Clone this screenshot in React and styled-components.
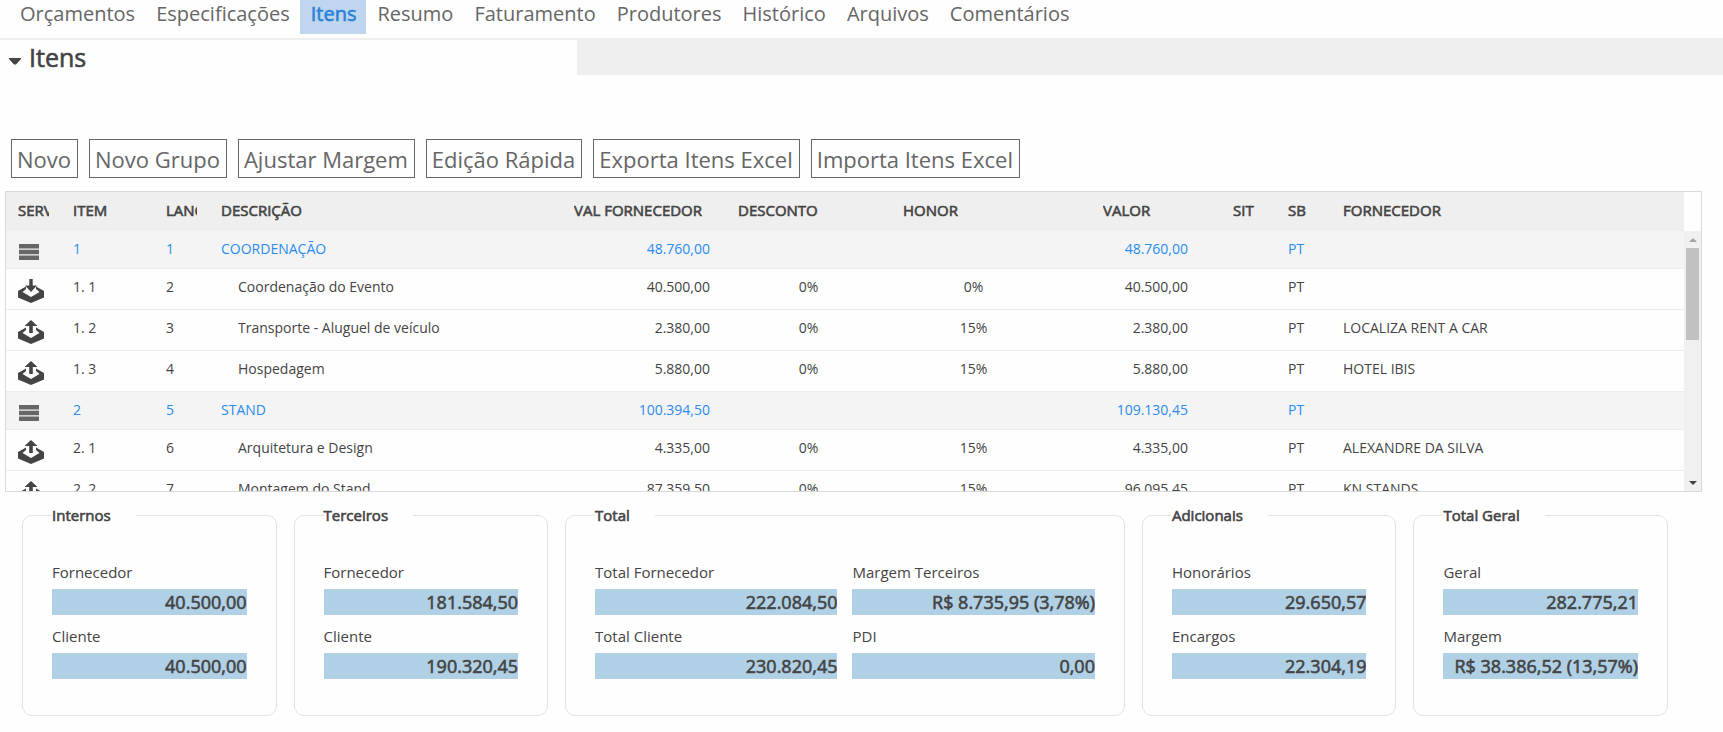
import React from "react";
import styled, { createGlobalStyle, css } from "styled-components";

const tabs = [
  "Orçamentos",
  "Especificações",
  "Itens",
  "Resumo",
  "Faturamento",
  "Produtores",
  "Histórico",
  "Arquivos",
  "Comentários",
];

const actions = [
  "Novo",
  "Novo Grupo",
  "Ajustar Margem",
  "Edição Rápida",
  "Exporta Itens Excel",
  "Importa Itens Excel",
];

// Columns without a width share what is left
const columns = [
  { key: "serv", title: "SERV", width: 55 },
  { key: "item", title: "ITEM", width: 93 },
  { key: "lanc", title: "LANC", width: 55 },
  { key: "desc", title: "DESCRIÇÃO" },
  { key: "cost", title: "VAL FORNECEDOR", width: 164, align: "right", end: 16 },
  { key: "discount", title: "DESCONTO", width: 165, align: "center" },
  { key: "fee", title: "HONOR", width: 165, align: "center" },
  { key: "value", title: "VALOR", width: 165, align: "right", start: 47, end: 33 },
  { key: "sit", title: "SIT", width: 55 },
  { key: "sb", title: "SB", width: 55 },
  { key: "supplier", title: "FORNECEDOR" },
];

const rows = [
  { type: "group", item: "1", lanc: "1", desc: "COORDENAÇÃO", cost: "48.760,00", value: "48.760,00", sb: "PT" },
  { type: "in", item: "1. 1", lanc: "2", desc: "Coordenação do Evento", cost: "40.500,00", discount: "0%", fee: "0%", value: "40.500,00", sb: "PT" },
  { type: "out", item: "1. 2", lanc: "3", desc: "Transporte - Aluguel de veículo", cost: "2.380,00", discount: "0%", fee: "15%", value: "2.380,00", sb: "PT", supplier: "LOCALIZA RENT A CAR" },
  { type: "out", item: "1. 3", lanc: "4", desc: "Hospedagem", cost: "5.880,00", discount: "0%", fee: "15%", value: "5.880,00", sb: "PT", supplier: "HOTEL IBIS" },
  { type: "group", item: "2", lanc: "5", desc: "STAND", cost: "100.394,50", value: "109.130,45", sb: "PT" },
  { type: "out", item: "2. 1", lanc: "6", desc: "Arquitetura e Design", cost: "4.335,00", discount: "0%", fee: "15%", value: "4.335,00", sb: "PT", supplier: "ALEXANDRE DA SILVA" },
  { type: "out", item: "2. 2", lanc: "7", desc: "Montagem do Stand", cost: "87.359,50", discount: "0%", fee: "15%", value: "96.095,45", sb: "PT", supplier: "KN STANDS" },
];

const totals = [
  { title: "Internos", fields: [["Fornecedor", "40.500,00"], ["Cliente", "40.500,00"]] },
  { title: "Terceiros", fields: [["Fornecedor", "181.584,50"], ["Cliente", "190.320,45"]] },
  {
    title: "Total",
    wide: true,
    fields: [
      ["Total Fornecedor", "222.084,50"],
      ["Margem Terceiros", "R$ 8.735,95 (3,78%)"],
      ["Total Cliente", "230.820,45"],
      ["PDI", "0,00"],
    ],
  },
  { title: "Adicionais", fields: [["Honorários", "29.650,57"], ["Encargos", "22.304,19"]] },
  { title: "Total Geral", fields: [["Geral", "282.775,21"], ["Margem", "R$ 38.386,52 (13,57%)"]] },
];

const App = () => {
  return (
    <>
      <GlobalStyle />
      <TabBar>
        {tabs.map((tab) => (
          <Tab key={tab} href="#" $active={tab === "Itens"}>
            {tab}
          </Tab>
        ))}
      </TabBar>
      <main>
        <SectionHeader>
          <SectionToggle>
            <Caret viewBox="0 0 12 7">
              <path d="M0 0h12v1L7 6.5H5L0 1z" />
            </Caret>
            <SectionTitle>Itens</SectionTitle>
          </SectionToggle>
        </SectionHeader>
        <Toolbar>
          {actions.map((action) => (
            <ActionButton key={action} type="button">
              {action}
            </ActionButton>
          ))}
        </Toolbar>
        <ItemsGrid />
        <Totals>
          {totals.map((group) => (
            <TotalsGroup key={group.title} {...group} />
          ))}
        </Totals>
      </main>
    </>
  );
};

const ItemsGrid = () => {
  return (
    <GridPanel>
      <GridViewport>
        <Table>
          <colgroup>
            {columns.map(({ key, width }) => (
              <col key={key} width={width} />
            ))}
          </colgroup>
          <thead>
            <tr>
              {columns.map(({ key, title, start }) => (
                <HeadCell key={key} $start={start}>
                  <Clip>{title}</Clip>
                </HeadCell>
              ))}
            </tr>
          </thead>
          <tbody>
            {rows.map((row) => (
              <Row key={row.lanc} $group={row.type === "group"}>
                {columns.map(({ key, align, end }) => (
                  <Cell
                    key={key}
                    $align={align}
                    $end={end}
                    $indent={key === "desc" && row.type !== "group"}
                  >
                    {key === "serv" ? <ServiceIcon type={row.type} /> : row[key]}
                  </Cell>
                ))}
              </Row>
            ))}
          </tbody>
        </Table>
      </GridViewport>
      <ScrollColumn>
        <ScrollTrack>
          <ScrollButton type="button" aria-label="Rolar para cima">
            <ScrollArrow viewBox="0 0 8 4" $muted>
              <path d="M0 4L4 0l4 4z" />
            </ScrollArrow>
          </ScrollButton>
          <ScrollThumb />
          <ScrollButton type="button" aria-label="Rolar para baixo">
            <ScrollArrow viewBox="0 0 8 4">
              <path d="M0 0l4 4 4-4z" />
            </ScrollArrow>
          </ScrollButton>
        </ScrollTrack>
      </ScrollColumn>
    </GridPanel>
  );
};

const ServiceIcon = ({ type }) => {
  if (type === "group") {
    return (
      <GroupIcon viewBox="0 0 20 16">
        <path d="M0 0h20v4.5H0zM0 5.75h20v4.5H0zM0 11.5h20V16H0z" />
      </GroupIcon>
    );
  }
  return (
    <TrayIcon viewBox="0 0 26 24">
      {type === "in" ? (
        <path d="M11.3 0h3.400v6.500h4.300l-6 6.500-6-6.500h4.300z" />
      ) : (
        <path d="M13 0l6.500 6h-4.700v7h-3.600V6H6.500z" />
      )}
      <path d="M8 7.500v2.500L4.500 13l8.500 5 8.500-5-3.500-3V7.500l8 4.500v6.500L13 24 0 18.500V12z" />
    </TrayIcon>
  );
};

const TotalsGroup = ({ title, wide, fields }) => {
  return (
    <Fieldset>
      <Legend>{title}</Legend>
      <Fields $wide={wide}>
        {fields.map(([label, value]) => (
          <Field key={label}>
            {label}
            <FieldValue readOnly value={value} />
          </Field>
        ))}
      </Fields>
    </Fieldset>
  );
};

const GlobalStyle = createGlobalStyle`
  * {
    box-sizing: border-box;
  }

  body {
    margin: 0;
    background: #fefefe;
    color: #444;
    font-family: "Open Sans", "Noto Sans", sans-serif;
    font-size: 14px;
    overflow-x: hidden;
  }
`;

// Regular weight thickened, the headings keep the regular letter widths
const thick = css`
  font-weight: 400;
  -webkit-text-stroke: 0.6px currentColor;
`;

const TabBar = styled.nav`
  display: flex;
  height: 40px;
  padding-left: 9px;
  border-bottom: 2px solid #efefef;
`;

const Tab = styled.a`
  height: 34px;
  padding: 0 10px 0 11px;
  font-size: 20px;
  line-height: 28px;
  color: #666;
  text-decoration: none;
  white-space: nowrap;

  ${({ $active }) =>
    $active &&
    css`
      ${thick}
      color: #2a82d7;
      background: #bfd6ee;
    `}
`;

const SectionHeader = styled.header`
  display: flex;
  height: 35px;
  background: #efefef;
`;

const SectionToggle = styled.div`
  display: flex;
  align-items: center;
  gap: 8px;
  width: 33.5%;
  padding-left: 9px;
  background: #fefefe;
`;

const Caret = styled.svg`
  width: 12px;
  height: 7px;
  margin-top: 8px;
  fill: #444;
`;

const SectionTitle = styled.h2`
  ${thick}
  margin: 0;
  font-size: 25px;
  line-height: 35px;
`;

const Toolbar = styled.div`
  display: flex;
  flex-wrap: wrap;
  gap: 11px;
  padding: 64px 11px 13px;
`;

const ActionButton = styled.button`
  height: 39px;
  padding: 0 6px 0 5px;
  border: 1px solid #666;
  background: transparent;
  color: #666;
  font-family: inherit;
  font-size: 22px;
  line-height: 34px;
  white-space: nowrap;
`;

const GridPanel = styled.section`
  display: flex;
  height: 301px;
  margin: 0 21px 0 5px;
  border: 1px solid #d9d9d9;
`;

const GridViewport = styled.div`
  flex: 1;
  min-width: 0;
  overflow: hidden;
`;

const Table = styled.table`
  width: 100%;
  table-layout: fixed;
  border-collapse: separate;
  border-spacing: 0;
`;

const HeadCell = styled.th`
  ${thick}
  height: 39px;
  padding: 0 12px 4px;
  padding-left: ${({ $start }) => $start || 12}px;
  background: #efefef;
  font-size: 15px;
  line-height: 22px;
  text-align: left;
`;

const Clip = styled.div`
  overflow: hidden;
  white-space: nowrap;
`;

const Row = styled.tr`
  height: ${({ $group }) => ($group ? 38 : 41)}px;
  background: ${({ $group }) => ($group ? "#f4f4f4" : "#fefefe")};
  color: ${({ $group }) => ($group ? "#2a8cf0" : "#444")};
`;

const Cell = styled.td`
  padding: 8px 12px 0;
  padding-left: ${({ $indent }) => ($indent ? 29 : 12)}px;
  padding-right: ${({ $end }) => $end || 12}px;
  border-bottom: 1px solid #ebebeb;
  line-height: 20px;
  text-align: ${({ $align }) => $align || "left"};
  vertical-align: top;
  white-space: nowrap;
`;

const GroupIcon = styled.svg`
  display: block;
  width: 20px;
  height: 16px;
  margin: 5px 0 0 1px;
  fill: #666;
`;

const TrayIcon = styled.svg`
  display: block;
  width: 26px;
  height: 24px;
  margin-top: 2px;
  fill: #444;
`;

const ScrollColumn = styled.div`
  width: 17px;
  padding-top: 39px;
`;

const ScrollTrack = styled.div`
  display: flex;
  flex-direction: column;
  align-items: center;
  height: 100%;
  background: #f0f0f0;
`;

const ScrollButton = styled.button`
  display: flex;
  align-items: center;
  justify-content: center;
  width: 17px;
  height: 17px;
  padding: 0;
  border: 0;
  background: none;

  &:last-child {
    margin-top: auto;
  }
`;

const ScrollArrow = styled.svg`
  width: 8px;
  height: 4px;
  fill: ${({ $muted }) => ($muted ? "#a3a3a3" : "#444")};
`;

const ScrollThumb = styled.div`
  width: 13px;
  height: 92px;
  background: #c1c1c1;
`;

const Totals = styled.div`
  display: grid;
  grid-template-columns: 5fr 5fr 11fr 5fr 5fr;
  gap: 17px;
  padding: 12px 55px 16px 22px;
`;

const Fieldset = styled.fieldset`
  min-width: 0;
  margin: 0;
  padding: 35px 29px 36px;
  border: 1px solid #e2e2e2;
  border-radius: 10px;
`;

const Legend = styled.legend`
  ${thick}
  padding: 0 25px 0 0;
  font-size: 15px;
  line-height: 22px;
`;

const Fields = styled.div`
  display: grid;
  grid-template-columns: ${({ $wide }) => ($wide ? "1fr 1fr" : "1fr")};
  gap: 10px 15px;
`;

const Field = styled.label`
  display: flex;
  flex-direction: column;
  gap: 6px;
  min-width: 0;
  font-size: 15px;
  line-height: 22px;
`;

const FieldValue = styled.input`
  ${thick}
  width: 100%;
  height: 26px;
  padding: 0;
  border: 0;
  background: #b0d0e5;
  color: #444;
  font-family: inherit;
  font-size: 18px;
  text-align: right;
`;

export default App;
